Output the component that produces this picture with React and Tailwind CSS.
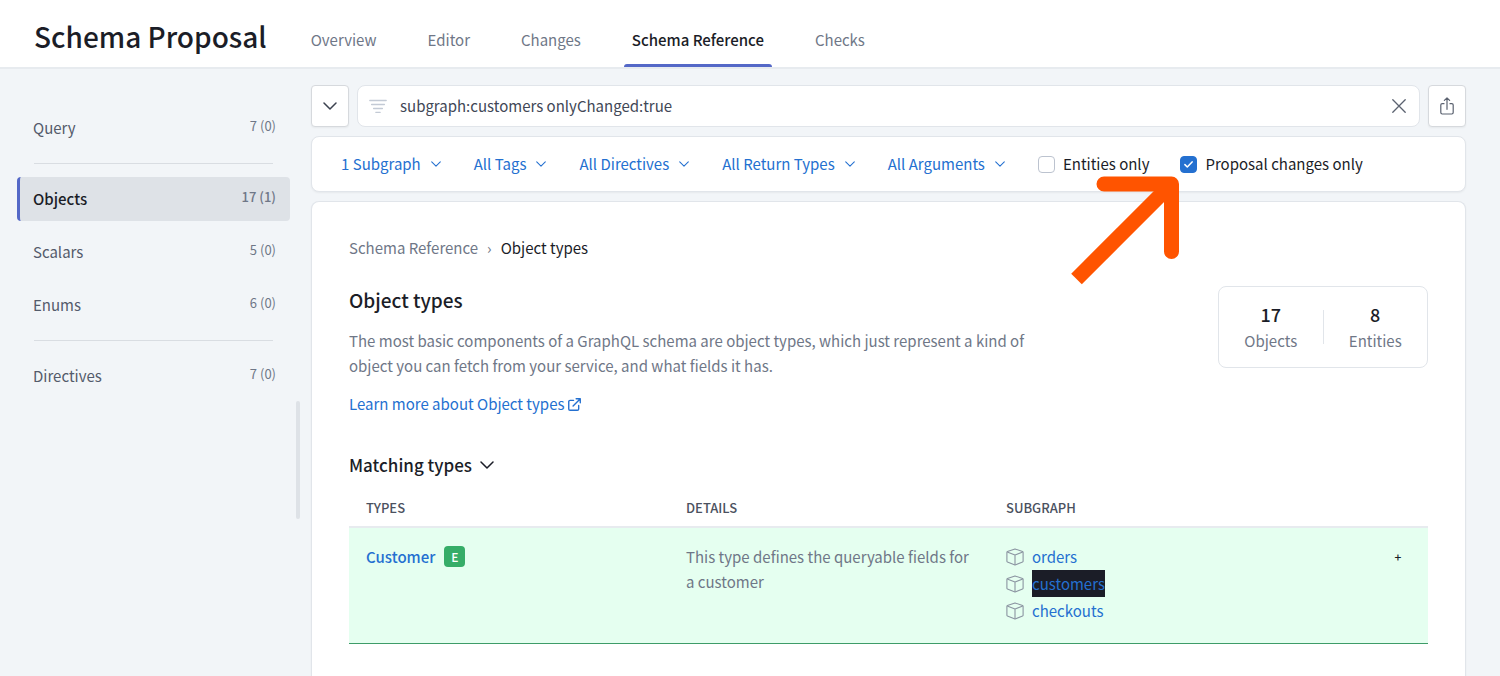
import React, { useState } from 'react';

const tabs = ['Overview', 'Editor', 'Changes', 'Schema Reference', 'Checks'];

const navGroups = [
  [{ name: 'Query', count: '7 (0)' }],
  [
    { name: 'Objects', count: '17 (1)', active: true },
    { name: 'Scalars', count: '5 (0)' },
    { name: 'Enums', count: '6 (0)' },
  ],
  [{ name: 'Directives', count: '7 (0)' }],
];

const filters = ['1 Subgraph', 'All Tags', 'All Directives', 'All Return Types', 'All Arguments'];

const subgraphs = [
  { name: 'orders' },
  { name: 'customers', highlighted: true },
  { name: 'checkouts' },
];

function Chevron({ className }) {
  return (
    <svg viewBox="0 0 14 8" className={className} fill="none" stroke="currentColor" strokeLinecap="round" strokeLinejoin="round" aria-hidden="true">
      <path d="M1 1l6 6 6-6" />
    </svg>
  );
}

function CubeIcon() {
  return (
    <svg viewBox="0 0 18 18" className="size-[18px] shrink-0 text-[#8b95a1]" fill="none" stroke="currentColor" strokeWidth="1.1" strokeLinejoin="round" aria-hidden="true">
      <path d="M9 .9l7.600 2.700c.3.1.5.4.5.7v9c0 .4-.2.7-.5.8L9 17.100l-7.600-3c-.3-.1-.5-.4-.5-.8v-9c0-.3.200-.6.500-.7z" />
      <path d="M1.200 4L9 7 16.800 4M9 7v10" />
    </svg>
  );
}

function Header() {
  return (
    <header className="flex h-[69px] items-stretch border-b-2 border-[#e7ebef] bg-white pl-[34px]">
      <h1 className="mt-4 text-[28px] leading-10 font-medium whitespace-nowrap text-[#1b1d27]">Schema Proposal</h1>
      <nav className="ml-9 flex gap-[35px]">
        {tabs.map((tab) => {
          const active = tab === 'Schema Reference';
          return (
            <a
              key={tab}
              href="#"
              aria-current={active ? 'page' : undefined}
              className={
                'flex flex-col justify-between px-2 pt-7 whitespace-nowrap ' +
                (active ? 'font-medium text-[#1b1d27]' : 'text-[#6f7787]')
              }
            >
              {tab}
              {active && <span className="-mx-2 h-[3px] rounded-t-sm bg-[#5468c7]" />}
            </a>
          );
        })}
      </nav>
    </header>
  );
}

function Sidebar() {
  return (
    <aside className="flex w-[311px] shrink-0 pt-[37px] pl-[17px]">
      <nav className="flex w-[273px] flex-col">
        {navGroups.map((group, i) => (
          <div key={i}>
            {i > 0 && <hr className="mt-[13px] mr-[17px] mb-[13px] ml-[17px] border-[#d9dde2]" />}
            <ul className="flex flex-col gap-[9px]">
              {group.map((item) => (
                <li key={item.name}>
                  <a
                    href="#"
                    className={
                      'flex h-11 items-center justify-between rounded-sm border-l-3 pr-[14px] pl-[13px] ' +
                      (item.active
                        ? 'border-[#5468c7] bg-[#dee2e7] font-medium text-[#1b1d27]'
                        : 'border-transparent text-[#545b6b]')
                    }
                  >
                    <span>{item.name}</span>
                    <span className={'pb-1 text-[13px] text-[#6f7787] ' + (item.active ? 'font-medium' : '')}>{item.count}</span>
                  </a>
                </li>
              ))}
            </ul>
          </div>
        ))}
      </nav>
      <div className="mt-[295px] ml-[6px] h-[118px] w-1 rounded-full bg-[#dee2e7]" />
    </aside>
  );
}

function SearchRow() {
  const [query, setQuery] = useState('subgraph:customers onlyChanged:true');
  return (
    <div className="flex h-[42px] gap-2">
      <button type="button" aria-label="Toggle filters" className="flex w-[38px] shrink-0 items-center justify-center rounded-sm border border-[#d6d9dd] bg-white text-[#3c4250] shadow-xs">
        <Chevron className="h-2 w-[14px] stroke-[1.5]" />
      </button>
      <div className="flex min-w-0 flex-1 items-center rounded-lg border border-[#e1e5ea] bg-white pr-[13px] pl-[11px]">
        <svg viewBox="0 0 18 14" className="h-[14px] w-[18px] shrink-0 text-[#c3cad5]" fill="none" stroke="currentColor" strokeWidth="1.300" strokeLinecap="round" aria-hidden="true">
          <path d="M.8 1.500h16.400M2.600 5.500h12.800M4.600 9.500h8.800M6.800 13.300h4.400" />
        </svg>
        <input
          aria-label="Search schema"
          value={query}
          onChange={(e) => setQuery(e.target.value)}
          className="ml-[13px] min-w-0 flex-1 bg-transparent text-[#414756] outline-none"
        />
        <button type="button" aria-label="Clear search" onClick={() => setQuery('')} className="text-[#5b6270]">
          <svg viewBox="0 0 14 14" className="size-[14px]" fill="none" stroke="currentColor" strokeWidth="1.300" strokeLinecap="round" aria-hidden="true">
            <path d="M.8.8l12.400 12.400M13.200.8L.8 13.200" />
          </svg>
        </button>
      </div>
      <button type="button" aria-label="Share" className="flex w-[38px] shrink-0 items-center justify-center rounded-sm border border-[#d6d9dd] bg-white text-[#5b6270] shadow-xs">
        <svg viewBox="0 0 14 18" className="h-[18px] w-[14px]" fill="none" stroke="currentColor" strokeWidth="1.200" strokeLinecap="round" strokeLinejoin="round" aria-hidden="true">
          <path d="M4 6.700H2.200C1.400 6.700.8 7.300.8 8.100v7.500c0 .8.600 1.400 1.400 1.400h9.600c.8 0 1.400-.6 1.400-1.400V8.100c0-.8-.6-1.400-1.400-1.400H10M7 12.300V1M4.400 3.400L7 .8l2.600 2.600" />
        </svg>
      </button>
    </div>
  );
}

function CheckField({ id, label, defaultChecked, children }) {
  return (
    <div className="relative flex h-6 items-center gap-2 whitespace-nowrap">
      <span className="grid size-[17px] place-items-center">
        <input
          id={id}
          type="checkbox"
          defaultChecked={defaultChecked}
          className="peer col-start-1 row-start-1 size-[17px] appearance-none rounded-sm border border-[#bcc3cf] bg-white checked:border-[#2470d0] checked:bg-[#2470d0]"
        />
        <svg viewBox="0 0 9 7" className="pointer-events-none col-start-1 row-start-1 hidden h-[7px] w-[9px] text-white peer-checked:block" fill="none" stroke="currentColor" strokeWidth="1.500" strokeLinecap="round" strokeLinejoin="round" aria-hidden="true">
          <path d="M.9 3.600l2.400 2.400L8.100.9" />
        </svg>
      </span>
      <label htmlFor={id}>{label}</label>
      {children}
    </div>
  );
}

function FilterBar() {
  return (
    <div className="mt-[9px] flex h-14 items-center gap-[33px] rounded-lg border border-[#e1e5ea] bg-white px-[29px] text-[#1b1d27] shadow-xs">
      {filters.map((name) => (
        <button key={name} type="button" aria-haspopup="menu" className="flex items-center gap-[10px] whitespace-nowrap text-[#2470d0]">
          {name}
          <Chevron className="h-[6px] w-[10px] stroke-[1.5]" />
        </button>
      ))}
      <div className="flex gap-[31px]">
        <CheckField id="entities-only" label="Entities only" />
        <CheckField id="proposal-changes-only" label="Proposal changes only" defaultChecked>
          <svg viewBox="0 0 110 109" className="pointer-events-none absolute top-full right-full z-10 h-[109px] w-[110px]" fill="none" stroke="#ff5400" strokeWidth="15" aria-hidden="true">
            <path d="M6.500 103L101.500 8" />
            <path d="M34 8h67.500v67.500" strokeLinecap="round" strokeLinejoin="round" />
          </svg>
        </CheckField>
      </div>
    </div>
  );
}

function Stat({ value, label }) {
  return (
    <div className="flex flex-1 flex-col items-center">
      <span className="text-lg leading-7 font-medium text-[#1b1d27]">{value}</span>
      <span className="leading-[26px] text-[#6f7787]">{label}</span>
    </div>
  );
}

function TypesTable() {
  return (
    <table className="mt-3 w-full table-fixed border-collapse text-left">
      <thead>
        <tr className="h-[38px] border-b-2 border-[#e7ebef] text-[13px] text-[#4b5160]">
          <th className="w-80 px-[17px] font-medium">TYPES</th>
          <th className="w-80 px-[17px] font-medium">DETAILS</th>
          <th className="px-[17px] font-medium">SUBGRAPH</th>
          <td className="w-[60px]" />
        </tr>
      </thead>
      <tbody>
        <tr className="h-[116px] border-b border-[#3d9c68] bg-[#e5fff0] align-top">
          <td className="px-[17px] pt-4">
            <div className="flex items-center gap-[9px]">
              <a href="#" className="leading-[25px] font-medium text-[#2470d0]">Customer</a>
              <span className="flex size-[21px] items-center justify-center rounded-sm bg-[#36ad68] text-xs font-medium text-white">E</span>
            </div>
          </td>
          <td className="px-[17px] pt-4 leading-[25px] text-[#6f7787]">This type defines the queryable fields for a customer</td>
          <td className="px-[17px] pt-[15px]">
            <ul>
              {subgraphs.map((s) => (
                <li key={s.name} className="flex items-center gap-2">
                  <CubeIcon />
                  <a href="#" className={'leading-[27px] text-[#2470d0] ' + (s.highlighted ? 'bg-[#1b1d27]' : '')}>{s.name}</a>
                </li>
              ))}
            </ul>
          </td>
          <td className="pt-4 text-center">
            <button type="button" aria-label="Expand Customer" className="text-xs leading-6 font-medium text-[#1b1d27]">+</button>
          </td>
        </tr>
      </tbody>
    </table>
  );
}

export default function App() {
  return (
    <div className="flex min-h-screen flex-col bg-[#f2f5f8] font-['Noto_Sans_CJK_SC','Source_Sans_Pro',sans-serif] text-[15px] leading-6">
      <Header />
      <div className="flex flex-1">
        <Sidebar />
        <main className="flex min-w-0 flex-1 flex-col pt-4 pr-[34px]">
          <SearchRow />
          <FilterBar />
          <section className="mt-[9px] flex-1 rounded-t-lg border border-b-0 border-[#e1e5ea] bg-white px-[37px] pt-[34px] shadow-xs">
            <nav aria-label="Breadcrumb" className="flex items-center gap-[9px] text-[#6f7787]">
              <a href="#">Schema Reference</a>
              <span aria-hidden="true">›</span>
              <span className="text-[#1b1d27]">Object types</span>
            </nav>
            <div className="mt-[26px] flex items-start justify-between gap-8">
              <div>
                <h2 className="text-[19px] leading-7 font-medium text-[#1b1d27]">Object types</h2>
                <p className="mt-[14px] max-w-[700px] leading-[25px] text-[#6f7787]">
                  The most basic components of a GraphQL schema are object types, which just represent a kind of object you can fetch from your service, and what fields it has.
                </p>
                <a href="#" className="mt-[14px] inline-flex items-center gap-1 text-[#2470d0]">
                  Learn more about Object types
                  <svg viewBox="0 0 14 14" className="size-[13px]" fill="none" stroke="currentColor" strokeWidth="1.500" strokeLinecap="round" strokeLinejoin="round" aria-hidden="true">
                    <path d="M6 2.500H2.200c-.8 0-1.400.6-1.400 1.400v7.900c0 .8.600 1.400 1.400 1.400h7.900c.8 0 1.400-.6 1.400-1.400V8M8.800.8h4.400v4.400M13 1L5.500 8.500" />
                  </svg>
                </a>
              </div>
              <div className="flex h-[82px] w-[210px] shrink-0 items-center rounded-lg border border-[#e1e5ea]">
                <Stat value="17" label="Objects" />
                <div className="h-[34px] w-px bg-[#e1e5ea]" />
                <Stat value="8" label="Entities" />
              </div>
            </div>
            <h3 className="mt-[37px] text-[17px] leading-6 font-medium text-[#1b1d27]">
              <button type="button" aria-expanded="true" className="flex items-center gap-2">
                Matching types
                <Chevron className="h-2 w-[14px] stroke-[1.5]" />
              </button>
            </h3>
            <TypesTable />
          </section>
        </main>
      </div>
    </div>
  );
}
